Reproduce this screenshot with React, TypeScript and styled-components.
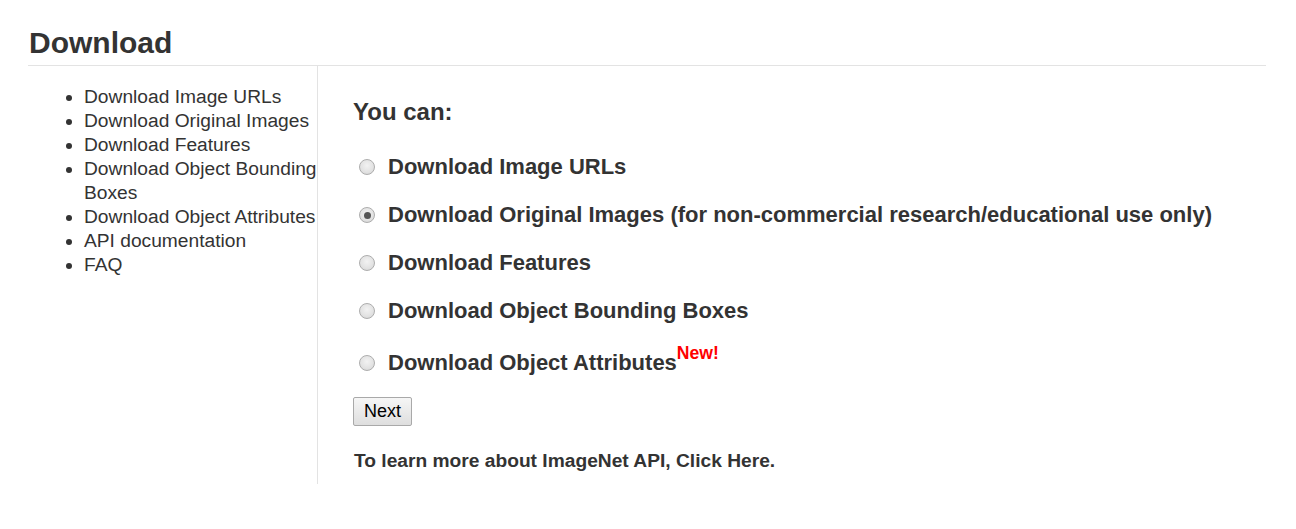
import React from "react";
import styled, { createGlobalStyle } from "styled-components";

const Global = createGlobalStyle`
  html, body { margin: 0; padding: 0; background: #fff; }
  body { font-family: "Liberation Sans", Arial, sans-serif; color: #333; }
`;

const Page = styled.div`
  padding: 0 30px 0 28px;
`;

const Header = styled.div`
  border-bottom: 1px solid #e3e3e3;
  padding: 28px 0 7px 1px;
`;

const Title = styled.h1`
  margin: 0;
  font-size: 30px;
  line-height: 30px;
  font-weight: bold;
  color: #333;
`;

const Columns = styled.div`
  display: grid;
  grid-template-columns: 290px 1fr;
`;

const Sidebar = styled.div`
  border-right: 1px solid #e3e3e3;
`;

const NavList = styled.ul`
  margin: 19px -4px 0 0;
  padding-left: 56px;
  list-style: disc;
`;

const NavItem = styled.li`
  font-size: 19.2px;
  line-height: 24px;
  color: #333;
`;

const Main = styled.div`
  padding: 32px 0 12px 35px;
`;

const Lead = styled.h3`
  margin: 0 0 18px;
  font-size: 24px;
  line-height: 27px;
  font-weight: bold;
  color: #333;
`;

const Option = styled.label<{ $extra?: number }>`
  display: flex;
  align-items: center;
  height: 48px;
  margin-top: ${(p) => p.$extra ?? 0}px;
  font-size: 22px;
  font-weight: bold;
  color: #333;
`;

const Radio = styled.span<{ $checked?: boolean }>`
  box-sizing: border-box;
  width: 16px;
  height: 16px;
  margin: 0 13px 0 6px;
  border-radius: 50%;
  border: 1px solid #adadad;
  background: radial-gradient(circle at 50% 40%, #f2f2f2 0%, #e2e2e2 60%, #d0d0d0 100%);
  display: flex;
  align-items: center;
  justify-content: center;
  flex: none;
  &::after {
    content: "";
    display: ${(p) => (p.$checked ? "block" : "none")};
    width: 7px;
    height: 7px;
    border-radius: 50%;
    background: #555;
  }
`;

const New = styled.sup`
  color: #ff0000;
  font-size: 17.6px;
  line-height: 0;
  position: relative;
  top: -3px;
`;

const Button = styled.button`
  display: block;
  margin-top: 10px;
  width: 59px;
  height: 29px;
  padding: 0;
  font-family: "Liberation Sans", Arial, sans-serif;
  font-size: 18px;
  color: #000;
  background: linear-gradient(#f6f6f6, #dedede);
  border: 1px solid #a9a9a9;
  border-radius: 2px;
`;

const Note = styled.p`
  margin: 24px 0 0 1px;
  font-size: 19.2px;
  line-height: 22px;
  font-weight: bold;
  color: #333;
`;

const nav = [
  "Download Image URLs",
  "Download Original Images",
  "Download Features",
  "Download Object Bounding Boxes",
  "Download Object Attributes",
  "API documentation",
  "FAQ",
];

export default function App() {
  return (
    <Page>
      <Global />
      <Header>
        <Title>Download</Title>
      </Header>
      <Columns>
        <Sidebar>
          <NavList>
            {nav.map((n) => (
              <NavItem key={n}>{n}</NavItem>
            ))}
          </NavList>
        </Sidebar>
        <Main>
          <Lead>You can:</Lead>
          <Option>
            <Radio />
            Download Image URLs
          </Option>
          <Option>
            <Radio $checked />
            Download Original Images (for non-commercial research/educational use only)
          </Option>
          <Option>
            <Radio />
            Download Features
          </Option>
          <Option>
            <Radio />
            Download Object Bounding Boxes
          </Option>
          <Option $extra={4}>
            <Radio />
            <span>
              Download Object Attributes<New>New!</New>
            </span>
          </Option>
          <Button>Next</Button>
          <Note>To learn more about ImageNet API, Click Here.</Note>
        </Main>
      </Columns>
    </Page>
  );
}
